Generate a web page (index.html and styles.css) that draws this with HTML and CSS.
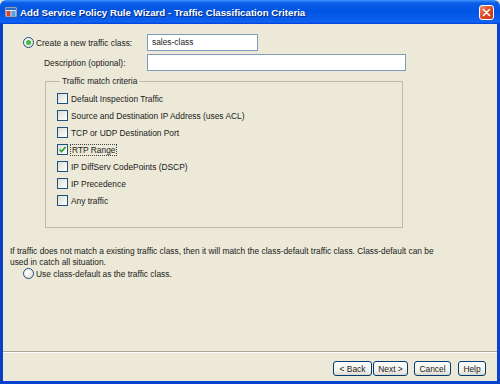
FILE: index.html
```html
<!DOCTYPE html>
<html lang="en">
<head>
    <meta charset="UTF-8">
    <title>Add Service Policy Rule Wizard - Traffic Classification Criteria</title>
    <link rel="stylesheet" href="styles.css">
</head>
<body>

<div class="window">
    <div class="titlebar">
        <svg class="app-icon" width="14" height="14" viewBox="0 0 14 14">
            <rect x="1" y="2" width="12" height="10" rx="1" fill="#dfe8f5" stroke="#3a5a8c"/>
            <rect x="2" y="3" width="10" height="2" fill="#2f6fc9"/>
            <rect x="2.5" y="6" width="4" height="5" fill="#d8432f"/>
            <rect x="7.5" y="6" width="4" height="5" fill="#4fa0e0"/>
        </svg>
        <span class="title">Add Service Policy Rule Wizard - Traffic Classification Criteria</span>
        <span class="close-btn">
            <svg width="15" height="15" viewBox="0 0 15 15">
                <path d="M4 4 L11 11 M11 4 L4 11" stroke="#fff" stroke-width="1.8" stroke-linecap="round"/>
            </svg>
        </span>
    </div>

    <div class="frame">
        <div class="content">
            <div class="row">
                <span class="choice">
                    <span class="radio checked"></span>
                    <span>Create a new traffic class:</span>
                </span>
                <span class="textbox small">sales-class</span>
            </div>
            <div class="row">
                <span class="choice indent">Description (optional):</span>
                <span class="textbox wide"></span>
            </div>

            <fieldset class="group">
                <legend>Traffic match criteria</legend>
                <div class="check-row"><span class="checkbox"></span><span>Default Inspection Traffic</span></div>
                <div class="check-row"><span class="checkbox"></span><span>Source and Destination IP Address (uses ACL)</span></div>
                <div class="check-row"><span class="checkbox"></span><span>TCP or UDP Destination Port</span></div>
                <div class="check-row"><span class="checkbox checked">
                    <svg width="9" height="9" viewBox="0 0 9 9"><path d="M1.5 4.5 L3.5 6.5 L7.5 2" fill="none" stroke="#21a121" stroke-width="1.6"/></svg>
                </span><span class="focused">RTP Range</span></div>
                <div class="check-row"><span class="checkbox"></span><span>IP DiffServ CodePoints (DSCP)</span></div>
                <div class="check-row"><span class="checkbox"></span><span>IP Precedence</span></div>
                <div class="check-row"><span class="checkbox"></span><span>Any traffic</span></div>
            </fieldset>

            <p class="note">If traffic does not match a existing traffic class, then it will match the class-default traffic class. Class-default can be<br>used in catch all situation.</p>

            <div class="row">
                <span class="choice free">
                    <span class="radio"></span>
                    <span>Use class-default as the traffic class.</span>
                </span>
            </div>
        </div>

        <div class="footer">
            <button class="btn back">&lt; Back</button>
            <button class="btn next">Next &gt;</button>
            <button class="btn cancel">Cancel</button>
            <button class="btn help">Help</button>
        </div>
    </div>
</div>

</body>
</html>
```

FILE: styles.css
```css
* {
    margin: 0;
    padding: 0;
    box-sizing: border-box;
}

body {
    width: 500px;
    height: 384px;
    overflow: hidden;
    font-family: 'Liberation Sans', Arial, sans-serif;
    font-size: 8.4px;
    color: #1a1a1a;
    background: #ece9d8;
}

.window {
    width: 500px;
    height: 384px;
    display: flex;
    flex-direction: column;
}

/* title bar */
.titlebar {
    height: 24px;
    display: flex;
    align-items: center;
    padding: 0 5px 0 4px;
    border-radius: 6px 6px 0 0;
    background: linear-gradient(180deg, #3d95ff 0%, #0a5ee8 12%, #0054e3 45%, #0a5cec 80%, #0f62f2 92%, #003dd7 100%);
    color: #fff;
}

.app-icon {
    margin-right: 2px;
}

.title {
    flex: 1;
    font-weight: bold;
    font-size: 9.7px;
    text-shadow: 1px 1px 0 #0a2a7a;
}

.close-btn {
    width: 15px;
    height: 15px;
    margin-top: 1px;
    margin-right: 1px;
    border: 1px solid #fff;
    border-radius: 3px;
    background: linear-gradient(135deg, #f28c6a, #d9451f 55%, #c2381a);
    display: flex;
    align-items: center;
    justify-content: center;
}

.close-btn svg {
    width: 13px;
    height: 13px;
}

/* window body */
.frame {
    flex: 1;
    display: flex;
    flex-direction: column;
    border: 3px solid #0842d0;
    border-top: none;
    border-left-color: #0a3ec4;
    background: #ece9d8;
}

.content {
    flex: 1;
    padding: 10px 0 0 7px;
}

.row {
    display: flex;
    align-items: center;
    margin-left: 13px;
    margin-bottom: 3px;
}

.choice {
    width: 124px;
    display: flex;
    align-items: center;
    gap: 2px;
}

.choice.indent {
    padding-left: 21px;
}

.choice.free {
    width: auto;
}

.textbox {
    height: 17px;
    border: 1px solid #7f9db9;
    background: #fff;
    padding: 0 4px;
    line-height: 15px;
}

.textbox.small {
    width: 111px;
}

.textbox.wide {
    width: 259px;
}

.radio {
    width: 11px;
    height: 11px;
    border: 1px solid #1c5180;
    border-radius: 50%;
    background: radial-gradient(circle at 35% 35%, #fff, #dcdcd4);
    display: flex;
    align-items: center;
    justify-content: center;
}

.radio.checked::after {
    content: '';
    width: 5px;
    height: 5px;
    border-radius: 50%;
    background: #3fbf3f;
}

/* group box */
.group {
    width: 358px;
    margin: 4px 0 0 35px;
    padding: 3px 0 18px 11px;
    border: 1px solid #bcbaa9;
}

.group legend {
    padding: 0 2px;
    margin-left: 3px;
    line-height: 12px;
}

.check-row {
    height: 17px;
    display: flex;
    align-items: center;
    gap: 3px;
}

.checkbox {
    width: 11px;
    height: 11px;
    border: 1px solid #1c5180;
    background: linear-gradient(135deg, #dcdcd4, #fff);
    display: flex;
    align-items: center;
    justify-content: center;
}

.focused {
    outline: 1px dotted #444;
    padding: 0 1px;
}

.note {
    margin-top: 18px;
    line-height: 11px;
    margin-bottom: 0;
    white-space: nowrap;
}

/* bottom buttons */
.footer {
    height: 30px;
    display: flex;
    justify-content: flex-end;
    align-items: flex-start;
    padding: 9px 11px 0 0;
    border-top: 1px solid #aca899;
    box-shadow: inset 0 1px 0 #fff;
}

.btn {
    height: 15px;
    font-family: inherit;
    font-size: 8.4px;
    color: #1a1a1a;
    border: 1px solid #003c74;
    border-radius: 3px;
    background: linear-gradient(180deg, #fff, #f0efe9 70%, #dcd9cd);
}

.back { width: 39px; margin-right: 1px; }
.next { width: 35px; margin-right: 6px; }
.cancel { width: 37px; margin-right: 7px; }
.help { width: 28px; }
```
